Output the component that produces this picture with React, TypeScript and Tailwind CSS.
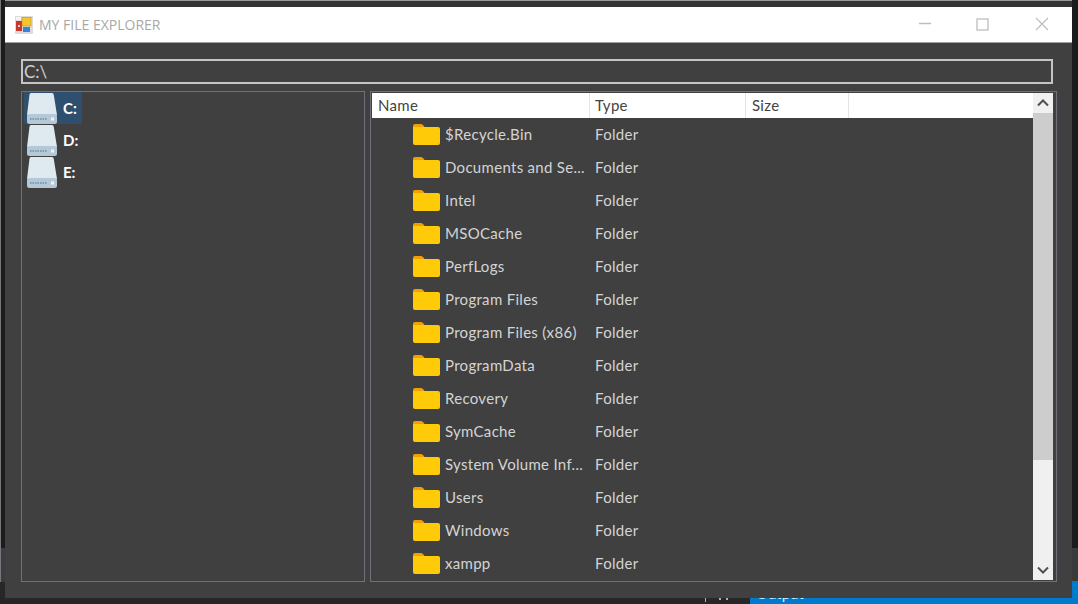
const drives = ['C:', 'D:', 'E:']

const folders = [
  '$Recycle.Bin',
  'Documents and Se...',
  'Intel',
  'MSOCache',
  'PerfLogs',
  'Program Files',
  'Program Files (x86)',
  'ProgramData',
  'Recovery',
  'SymCache',
  'System Volume Inf...',
  'Users',
  'Windows',
  'xampp',
]

function AppIcon() {
  return (
    <svg width="18" height="18" viewBox="0 0 18 18">
      <rect x="0" y="0" width="18" height="18" fill="#dcdcdc" />
      <rect x="1" y="1" width="5" height="3" fill="#f4f4f4" />
      <rect x="1" y="5" width="6" height="10" fill="#c8362c" />
      <rect x="3" y="9" width="2" height="2" fill="#f0d0c8" />
      <rect x="7" y="1.500" width="9" height="8.500" fill="#f5c52c" stroke="#b8902a" strokeWidth="0.600" />
      <rect x="8" y="11" width="7" height="5" fill="#3f7fd6" />
    </svg>
  )
}

function DriveIcon() {
  return (
    <svg width="32" height="31" viewBox="0 0 32 31" className="shrink-0">
      <path d="M3.500 1.500 Q3.600 0 5 0 H26 Q27.500 0 27.700 1.500 L31 22 H1 Z" fill="#dfe9f0" />
      <rect x="1" y="21" width="30" height="10" rx="2.500" fill="#b4c8d8" />
      <path d="M4 26 H21" stroke="#6f8ba3" strokeWidth="1.500" strokeDasharray="1.500 1" />
      <rect x="25" y="24.500" width="3" height="3" fill="#eef4f8" />
    </svg>
  )
}

function FolderIcon() {
  return (
    <svg width="27" height="21" viewBox="0 0 27 21" className="shrink-0">
      <path d="M0 2 Q0 0 2 0 H8 Q9.500 0 10.500 1.500 L11.500 3 H20 V6 H0 Z" fill="#f29f05" />
      <path d="M0 4 Q0 3 1 3 H25 Q27 3 27 5 V19 Q27 21 25 21 H2 Q0 21 0 19 Z" fill="#ffca08" />
    </svg>
  )
}

function WindowButtons() {
  return (
    <div className="flex items-center h-full text-[#bebebe]">
      <svg width="58" height="36" viewBox="0 0 58 36">
        <path d="M13 16.500 H25" stroke="currentColor" strokeWidth="1.500" />
      </svg>
      <svg width="59" height="36" viewBox="0 0 59 36">
        <rect x="13" y="12" width="11" height="11" fill="none" stroke="currentColor" strokeWidth="1.300" />
      </svg>
      <svg width="49" height="36" viewBox="0 0 49 36">
        <path d="M13 11 L25 23 M25 11 L13 23" stroke="currentColor" strokeWidth="1.200" />
      </svg>
    </div>
  )
}

export default function App() {
  return (
    <div className="relative w-[1078px] h-[604px] overflow-hidden bg-[#272727] font-['Lato','Noto_Sans',sans-serif]">
      {/* app behind the window */}
      <div className="absolute left-0 right-0 top-0 h-[7px] bg-[#343434] border-t border-[#9a9a9a]" />
      <div className="absolute left-0 top-0 w-[5px] h-[548px] bg-[#1c1c1c] border-l border-[#777]" />
      <div className="absolute left-0 top-[548px] w-[5px] h-[34px] bg-[#3c3c42] border-l border-[#777]" />
      <div className="absolute right-0 top-0 w-[6px] h-[548px] bg-[#1c1c1c]" />
      <div className="absolute right-0 top-[548px] w-[6px] h-[34px] bg-[#3a3a3a]" />
      <div className="absolute left-[705px] top-[598px] w-[1px] h-[4px] bg-[#b0b0b0]" />
      <div className="absolute left-[719px] top-[598px] w-[2px] h-[2px] bg-[#b0b0b0]" />
      <div className="absolute left-[726px] top-[598px] w-[2px] h-[2px] bg-[#b0b0b0]" />
      <div className="absolute right-0 bottom-0 w-[328px] h-[23px] bg-[#007acc] pl-[6px] pt-[2px] text-[15px] leading-[20px] text-[#dcecf8]">
        Output
      </div>

      {/* window */}
      <div className="absolute left-[5px] top-[7px] w-[1067px] h-[591px] flex flex-col bg-[#404040]">
        <div className="h-[36px] shrink-0 flex items-center justify-between bg-white border-b border-[#a0a0a0]">
          <div className="flex items-center pl-[10px]">
            <AppIcon />
            <span className="ml-[6px] text-[14px] text-[#aaa7a4] font-['Open_Sans',sans-serif]">MY FILE EXPLORER</span>
          </div>
          <WindowButtons />
        </div>

        <div className="flex-1 flex flex-col pl-[16px] pr-[14px] pt-[16px]">
          <div className="h-[25px] w-[1032px] shrink-0 border-2 border-[#c4c4c4] pl-[1px] flex items-center text-[17px] text-[#d0d0d0]">
            C:\
          </div>

          <div className="flex gap-[5px] mt-[7px] h-[491px]">
            {/* drives */}
            <div className="w-[344px] border-[1.500px] border-[#707078] pl-[2px]">
              {drives.map((d, i) => (
                <div key={d} className={`w-[58px] h-[32px] flex items-center ${i === 0 ? 'bg-[#2f4f6f]' : ''}`}>
                  <div className="ml-[2px]">
                    <DriveIcon />
                  </div>
                  <span className="ml-[5px] text-[15px] font-bold text-white">{d}</span>
                </div>
              ))}
            </div>

            {/* file list */}
            <div className="w-[687px] border-[1.500px] border-[#707078] flex pt-[1px] pl-[1px]">
              <div className="w-[661px] flex flex-col">
                <div className="h-[25px] shrink-0 bg-white flex items-center text-[15px] text-[#444] tracking-[0.3px]">
                  <div className="w-[218px] h-full pl-[6px] flex items-center border-r border-[#e4e4e4]">Name</div>
                  <div className="w-[156px] h-full pl-[5px] flex items-center border-r border-[#e4e4e4]">Type</div>
                  <div className="w-[103px] h-full pl-[6px] flex items-center border-r border-[#e4e4e4]">Size</div>
                </div>
                {folders.map((name) => (
                  <div key={name} className="h-[33px] shrink-0 flex items-center text-[15px] text-[#d4d4d4] tracking-[0.3px]">
                    <div className="w-[218px] flex items-center pl-[41px] whitespace-nowrap">
                      <FolderIcon />
                      <span className="ml-[5px]">{name}</span>
                    </div>
                    <div className="pl-[5px]">Folder</div>
                  </div>
                ))}
              </div>

              {/* scrollbar */}
              <div className="w-[20px] h-[487px] flex flex-col bg-[#f0f0f0]">
                <div className="h-[20px] flex items-center justify-center">
                  <svg width="12" height="8" viewBox="0 0 12 8">
                    <path d="M1 6.500 L6 1.500 L11 6.500" fill="none" stroke="#505050" strokeWidth="2" />
                  </svg>
                </div>
                <div className="h-[347px] bg-[#cdcdcd]" />
                <div className="flex-1 flex items-end justify-center pb-[6px]">
                  <svg width="12" height="8" viewBox="0 0 12 8">
                    <path d="M1 1.500 L6 6.500 L11 1.500" fill="none" stroke="#505050" strokeWidth="2" />
                  </svg>
                </div>
              </div>
            </div>
          </div>
        </div>
      </div>
    </div>
  )
}
